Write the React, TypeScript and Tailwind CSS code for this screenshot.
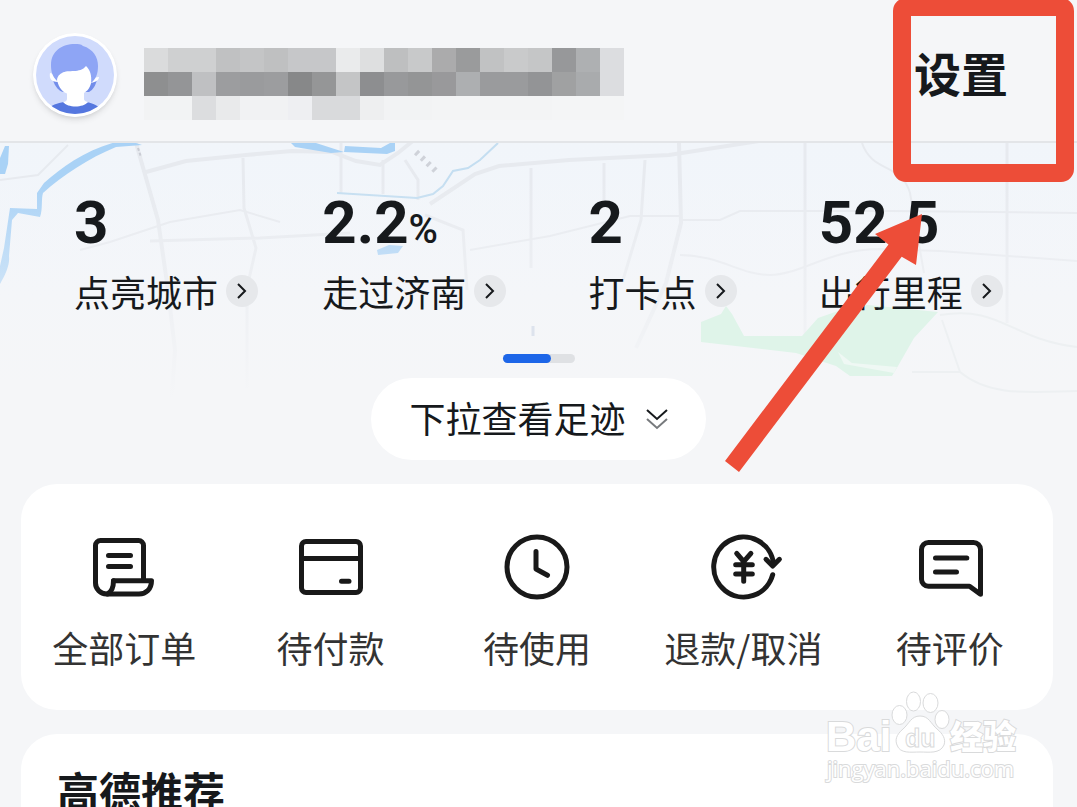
import React from 'react';

const stats = [
  { value: '3', unit: '', label: '点亮城市' },
  { value: '2.2', unit: '%', label: '走过济南' },
  { value: '2', unit: '', label: '打卡点' },
  { value: '52.5', unit: '', label: '出行里程' },
];

// 昵称打码的色块，每块 24px
const mosaic = [
  ['#dadbdc', '#cfd0d1', '#cfd0d1', '#c0c1c2', '#c4c5c6', '#bfc0c1', '#c6c7c9', '#c6c7c9', '#eaebec', '#dedfe0', '#bebfc0', '#c8c9ca', '#ababac', '#9a9b9c', '#c1c2c3', '#c9cacb', '#c5c6c7', '#97989a', '#aeb0b2', '#dcdde0'],
  ['#8e8f90', '#949597', '#bfc0c2', '#9c9d9f', '#9a9b9d', '#9c9d9f', '#878889', '#959697', '#c4c5c6', '#8d8e90', '#98999b', '#949596', '#99999b', '#adafb1', '#9a9b9d', '#9a9b9d', '#939496', '#a0a1a2', '#a9abad', '#dcdde0'],
  ['#f2f3f4', '#f2f3f4', '#dcdddf', '#e9eaeb', '#f1f2f3', '#f1f2f3', '#eeeff2', '#d9dadc', '#d9dadc', '#eeeff0', '#f2f3f4', '#f2f3f4', '#f3f4f5', '#f3f4f5', '#f3f4f5', '#f3f4f5', '#f3f4f5', '#f4f5f6', '#f4f5f6', '#f4f5f6'],
];

const actions = [
  {
    label: '全部订单',
    icon: (
      <>
        <path d="M55.5 48V14.5a5 5 0 0 0-5-5h-38a5 5 0 0 0-5 5V52a11 11 0 0 0 11 11H51c7 0 12.5-5 12.5-13.3H25.5" />
        <path d="M25.5 49.7c0 6-1 10.5-6 13.3" />
        <path d="M20.5 24.5h22M20.5 35.5h22" />
      </>
    ),
  },
  {
    label: '待付款',
    icon: (
      <>
        <rect x="6.5" y="10.5" width="59" height="51" rx="4.5" />
        <path d="M6.5 27.5h59M46.5 50.3h7.5" />
      </>
    ),
  },
  {
    label: '待使用',
    icon: (
      <>
        <circle cx="36" cy="36" r="30" />
        <path d="M35 20.5V38l11.5 6.3" />
      </>
    ),
  },
  {
    label: '退款/取消',
    icon: (
      <>
        <path d="M66.55 33A30 30 0 1 0 65.7 43.7" />
        <path d="M59 28.3l6.7 6.7 6.7-6.7" />
        <path d="M29.7 22.3l7 8.4 7.2-8.4M28.7 33.7h16.6M28.7 43h16.6M36.7 31v19.3" />
      </>
    ),
  },
  {
    label: '待评价',
    icon: (
      <>
        <path d="M14.5 11.5h45a7 7 0 0 1 7 7V63.2L55.5 55.2h-41a7 7 0 0 1-7-7V18.5a7 7 0 0 1 7-7z" />
        <path d="M21.5 27h31.3M21.5 41h21" />
      </>
    ),
  },
];

const Avatar: React.FC = () => (
  <svg viewBox="0 0 84 84" className="w-[84px] h-[84px] shrink-0 rounded-full shadow-md" aria-hidden="true">
    <circle cx="42" cy="42" r="42" fill="#fff" />
    <circle cx="42" cy="42" r="39" fill="#d0dbfc" />
    <clipPath id="avatar-clip">
      <circle cx="42" cy="42" r="39" />
    </clipPath>
    <g clipPath="url(#avatar-clip)">
      <path d="M20 47c2 7 6 11 10 12h26c4-2 7-7 8-13z" fill="#728dea" />
      <path d="M14 76c7-5 13-7 19-7h18c7 0 12 3 18 7v10H14z" fill="#5577df" />
      <path d="M34 58h17v8c0 2 3 3 4 3-5 6-20 6-25 0 2 0 4-1 4-3z" fill="#fff" />
      <path d="M17 40c-1 5 1 9 8 9l-1-7zM66 44c0 3-3 5-8 6v-5z" fill="#fff" />
      <path d="M24 30c-2 18 1 32 18 32 15 0 19-12 17-32z" fill="#fff" />
      <path d="M24 48c-5-5-6-10-6-16 0-14 11-21 24-21 3 0 6 0 8 2 10 3 15 11 15 20 0 8-2 13-7 17 1-8-1-13-5-17-6 8-18 3-24 7-4 2-5 5-5 8z" fill="#8ea5f5" />
    </g>
  </svg>
);

const MapBackground: React.FC = () => (
  <svg
    viewBox="0 143 1077 341"
    preserveAspectRatio="xMidYMin slice"
    className="absolute inset-0 w-full h-full"
    fill="none"
    aria-hidden="true"
  >
    <defs>
      <linearGradient id="map-bg" x1="0" y1="0" x2="0" y2="1">
        <stop offset="0" stopColor="#f1f5fa" />
        <stop offset="0.45" stopColor="#f3f6fa" />
        <stop offset="0.7" stopColor="#f5f6f8" />
      </linearGradient>
      <linearGradient id="map-fade" x1="0" y1="0" x2="0" y2="1">
        <stop offset="0.1" stopColor="#f5f6f8" stopOpacity="0" />
        <stop offset="0.45" stopColor="#f5f6f8" stopOpacity="0.5" />
        <stop offset="0.75" stopColor="#f5f6f8" stopOpacity="1" />
      </linearGradient>
    </defs>
    <rect y="143" width="1077" height="341" fill="url(#map-bg)" />
    <g stroke="#e7eaef" strokeWidth="4">
      <path d="M136 143l12 42 10 35 10 70 7 60-4 60" />
      <path d="M146 172l40-11 60-6 46-4 40 1 24 9 24 4 18-12 22-18" />
      <path d="M243 158l1 50 12 40-9 40v100M150 241l110-3 90-5" strokeWidth="3" />
      <path d="M341 143v50M383 160v34M405 160l13 20v20" strokeWidth="3" />
      <path d="M430 204l45-30 24-8 70-6 100-5 90-14" />
      <path d="M425 215l38 15 4 60M531 168v100M604 163v40" strokeWidth="3" />
      <path d="M679 143l2 80-15 60-30 65" />
      <path d="M645 160l-4 60-18 60M805 143v220M1007 143v180" strokeWidth="3" />
      <path d="M680 220h40l20-9h150l187 2M680 255c40 0 60 20 90 20s60-26 110-26l60 2 137 10" strokeWidth="2" />
      <path d="M862 143c10 30 40 20 48 50l14 80M470 250l80-14 80-20h50" strokeWidth="2" />
      <path d="M0 180l38-5 30-30M80 250l30-8 60-20 70-12 40 12" strokeWidth="2" />
    </g>
    <g fill="#a9d2f6">
      <path d="M0 158l5-12h4l-1 18-3 10H0z" />
      <path d="M136 143l-20-1c-30 8-54 25-72 41l-7 10v16l-27-1-6 40-4 18v18c6-10 10-20 9-28l3-36 6-7 22 4c3-8 1-18 3-24 20-18 46-35 73-46l26-2z" />
      <path d="M291 143h25l28 9-13 1-36-6zM345 146l36 2 9-5h5v8l-8 3-43-2z" />
      <path d="M377 250l12-5 14 1-5 7-20 2z" />
    </g>
    <path d="M498 143l-18 17-12 8-15 3-10 15-10 8-16 4-80-5" stroke="#c4def1" strokeWidth="2" />
    <path d="M416 152l22 21" stroke="#cfd2d9" strokeWidth="6" strokeDasharray="3 5" />
    <path d="M138 148l3 9" stroke="#c9ccd4" strokeWidth="2" strokeDasharray="3 2" />
    <rect y="143" width="1077" height="341" fill="url(#map-fade)" />
    <path d="M533 326v10" stroke="#dde3ed" strokeWidth="3" />
    <g fill="#dff4e9">
      <path d="M701 322l20-8 5-8 6 8 12 22h58l16-18 40-14 80 8-24 26-16 28-6 10h-42l-14-10-40-13-95-11z" />
      <path d="M838 352l14 11 45 4-3 6-50-9z" fill="#eff8f4" />
    </g>
    <path d="M940 315c60-10 70 24 137 32M942 320l18 52-48 0M960 372c30 25 70 20 117 19" stroke="#edf0f2" strokeWidth="2" />
  </svg>
);

// 百度经验水印
const Watermark: React.FC = () => (
  <svg viewBox="0 0 200 100" className="absolute top-[685px] right-[54px] w-[200px] h-[100px]" aria-label="Baidu 经验">
    <g fill="#fff" stroke="#d9dadb" strokeWidth="2" className="font-['Liberation_Sans','Noto_Sans_CJK_SC',sans-serif]">
      <g style={{ paintOrder: 'stroke' }}>
        <text x="3" y="66" fontSize="42" fontWeight="700">Bai</text>
        <text x="127" y="64" fontSize="33" fontWeight="900">经验</text>
        <text x="4" y="92" fontSize="22" className="font-['Open_Sans',sans-serif]">jingyan.baidu.com</text>
      </g>
      <ellipse cx="76.5" cy="30" rx="7.5" ry="9.5" strokeWidth="1" />
      <ellipse cx="90.5" cy="16.5" rx="7" ry="9.5" strokeWidth="1" />
      <ellipse cx="107.5" cy="18" rx="7.5" ry="9.5" strokeWidth="1" />
      <ellipse cx="119" cy="34.5" rx="7" ry="9" strokeWidth="1" />
      <path d="M97 31c-9 0-11 8-17 13-7 6-8 11-6 16 3 9 14 7 23 7s20 2 24-7c2-6-1-11-7-16-6-5-8-13-17-13z" strokeWidth="1" />
      <text x="82" y="62" fontSize="25" fontWeight="700" strokeWidth="1">du</text>
    </g>
  </svg>
);

const App: React.FC = () => {
  return (
    <div className="relative h-screen overflow-hidden bg-[#f5f6f8] text-[#16191c] font-['Noto_Sans_CJK_SC',sans-serif]">
      {/* 顶部用户信息 */}
      <header className="flex items-center justify-between h-[143px] pt-2 pl-[33px] pr-[69px] border-b-2 border-[#e3e5e8]">
        <div className="flex items-center gap-[27px]">
          <Avatar />
          <svg viewBox="0 0 480 72" className="w-[480px] h-[72px] mt-[18px]" shapeRendering="crispEdges" aria-hidden="true">
            {mosaic.map((row, y) =>
              row.map((color, x) => (
                <rect key={`${x}-${y}`} x={x * 24} y={y * 24} width="24" height="24" fill={color} />
              ))
            )}
          </svg>
        </div>
        <button className="pb-1.5 text-[47px] leading-[56px] font-bold">设置</button>
      </header>

      {/* 足迹地图 */}
      <section className="relative pt-[50px] pb-6">
        <MapBackground />
        <div className="relative grid grid-cols-4 justify-items-center px-[42px]">
          {stats.map((item) => (
            <button key={item.label} className="flex flex-col items-start gap-[18px]">
              <span className="h-[60px] font-['Roboto',sans-serif] text-[60px] leading-[60px] font-bold">
                {item.value}
                {item.unit && <span className="text-[40px] font-medium">{item.unit}</span>}
              </span>
              <span className="flex items-center gap-2 text-[36px] leading-[40px] whitespace-nowrap">
                {item.label}
                <svg viewBox="0 0 32 32" className="w-8 h-8" fill="none">
                  <circle cx="16" cy="16" r="16" fill="#e6e8eb" />
                  <path d="M12 9l7 7-7 7" stroke="#16191c" strokeWidth="2" />
                </svg>
              </span>
            </button>
          ))}
        </div>
        <div className="relative mx-auto mt-[43px] w-[72px] h-[9px] rounded-full bg-[#dfe1e4]">
          <div className="w-12 h-full rounded-full bg-[#1d66e8]" />
        </div>
        <button className="relative flex items-center gap-5 mx-auto mt-[15px] h-[82px] px-[38px] rounded-full bg-white text-[36px] leading-[40px]">
          <span className="pb-1">下拉查看足迹</span>
          <svg viewBox="0 0 22 22" className="w-[22px] h-[22px]" fill="none" strokeWidth="2">
            <path d="M1 2l10 9 10-9" stroke="#16191c" />
            <path d="M1 11l10 9 10-9" stroke="#777a7d" />
          </svg>
        </button>
      </section>

      {/* 订单入口 */}
      <section className="grid grid-cols-5 ml-[21px] mr-6 pt-[47px] pb-[43px] rounded-[36px] bg-white">
        {actions.map((action) => (
          <button key={action.label} className="flex flex-col items-center gap-6 text-[#333]">
            <svg
              viewBox="0 0 72 72"
              className="w-[72px] h-[72px] overflow-visible text-[#191919]"
              fill="none"
              stroke="currentColor"
              strokeWidth="5"
              strokeLinecap="round"
              strokeLinejoin="round"
            >
              {action.icon}
            </svg>
            <span className="text-[36px] leading-[40px] whitespace-nowrap">{action.label}</span>
          </button>
        ))}
      </section>

      {/* 推荐 */}
      <section className="ml-[21px] mr-6 mt-6 px-9 py-[30px] rounded-[36px] bg-white">
        <h2 className="text-[42px] leading-[52px] font-bold">高德推荐</h2>
      </section>

      <Watermark />

      {/* 红框和箭头标注 */}
      <svg viewBox="720 0 357 480" className="absolute top-0 right-0 w-[357px] h-[480px] pointer-events-none" aria-hidden="true">
        <rect x="902" y="7" width="163" height="166" rx="4" fill="none" stroke="#ed4d38" strokeWidth="18" />
        <path d="M922 214l-47 20 13.5 10.5L725 461l14 11 162.7-215.3L916 265z" fill="#ed4d38" />
      </svg>
    </div>
  );
};

export default App;
